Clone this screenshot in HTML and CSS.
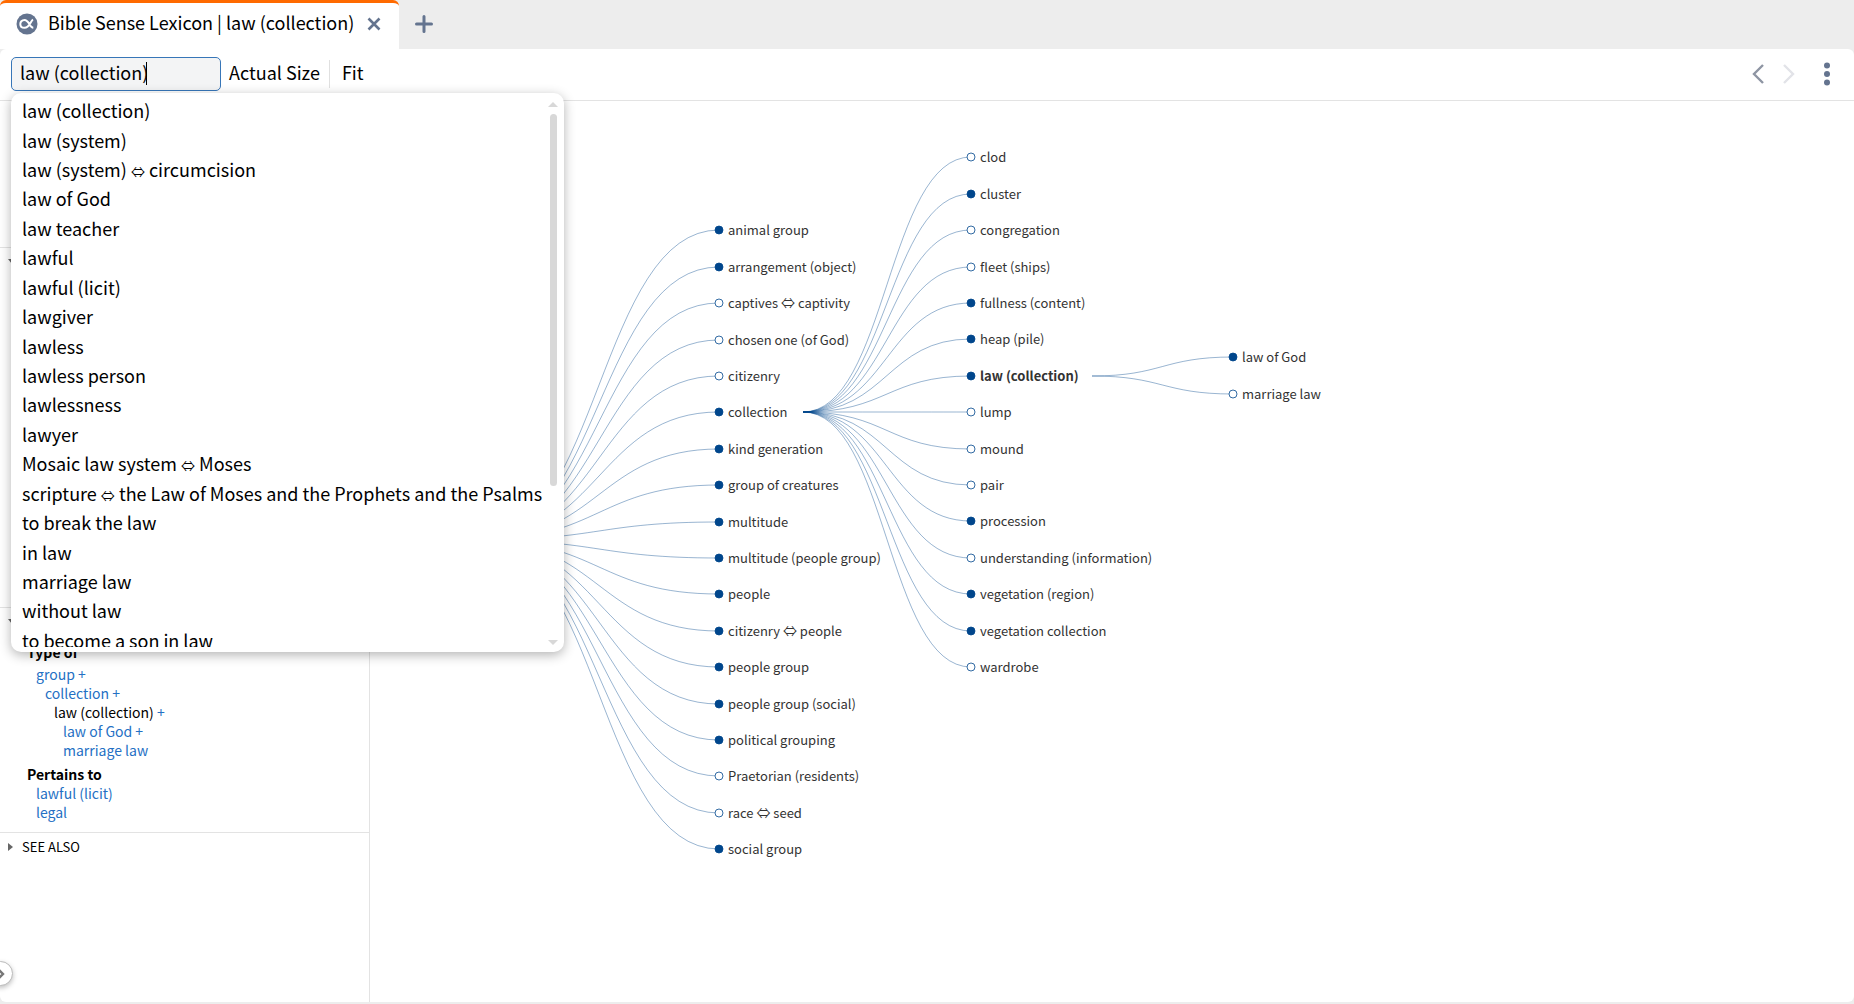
FILE: index.html
```html
<!DOCTYPE html>
<html lang="en">
<head>
    <meta charset="UTF-8">
    <meta name="viewport" content="width=device-width, initial-scale=1.0">
    <title>Bible Sense Lexicon</title>
    <link rel="stylesheet" href="styles.css">
</head>
<body>
    <header class="tabbar">
        <div class="tab">
            <svg class="tab-icon" viewBox="0 0 22 22" width="22" height="22">
                <circle cx="11" cy="11" r="10.5" fill="#64748f"/>
                <path d="M17 6.5C14.5 8 13.5 14.8 8.5 14.8C2.9 14.8 2.9 7 8.5 7C13.2 7 13.4 14.6 17.3 14.8" fill="none" stroke="#fff" stroke-width="2"/>
            </svg>
            <span class="tab-title">Bible Sense Lexicon | law (collection)</span>
            <button class="icon-btn" aria-label="Close tab">
                <svg viewBox="0 0 14 14" width="14" height="14"><path d="M1.5 1.5L12.5 12.5M12.5 1.5L1.5 12.5" stroke="#64748f" stroke-width="2.6"/></svg>
            </button>
        </div>
        <button class="icon-btn new-tab" aria-label="New tab">
            <svg viewBox="0 0 18 18" width="18" height="18"><path d="M9 1.5V16.5M1.5 9H16.5" stroke="#64748f" stroke-width="3" stroke-linecap="round"/></svg>
        </button>
    </header>

    <div class="toolbar">
        <div class="search">
            <input type="text" id="sense" value="law (collection)" aria-label="Sense" autocomplete="off">
            <span class="caret"></span>
            <div class="dropdown">
                <div class="list-clip">
                    <ul class="list">
                        <li>law (collection)</li>
                        <li>law (system)</li>
                        <li>law (system) <span class="arrow">⇔</span> circumcision</li>
                        <li>law of God</li>
                        <li>law teacher</li>
                        <li>lawful</li>
                        <li>lawful (licit)</li>
                        <li>lawgiver</li>
                        <li>lawless</li>
                        <li>lawless person</li>
                        <li>lawlessness</li>
                        <li>lawyer</li>
                        <li>Mosaic law system <span class="arrow">⇔</span> Moses</li>
                        <li>scripture <span class="arrow">⇔</span> the Law of Moses and the Prophets and the Psalms</li>
                        <li>to break the law</li>
                        <li>in law</li>
                        <li>marriage law</li>
                        <li>without law</li>
                        <li>to become a son in law</li>
                    </ul>
                </div>
                <div class="scrollbar">
                    <svg viewBox="0 0 10 5" width="10" height="5"><path d="M0 5L5 0L10 5Z" fill="#d8d8d8"/></svg>
                    <div class="track"><div class="thumb"></div></div>
                    <svg viewBox="0 0 10 5" width="10" height="5"><path d="M0 0L5 5L10 0Z" fill="#d8d8d8"/></svg>
                </div>
            </div>
        </div>
        <button class="text-btn">Actual Size</button>
        <span class="divider"></span>
        <button class="text-btn">Fit</button>
        <div class="nav">
            <button class="icon-btn" aria-label="Back">
                <svg viewBox="0 0 12 20" width="12" height="20"><path d="M11 1L2 10L11 19" fill="none" stroke="#8e95a3" stroke-width="2.4"/></svg>
            </button>
            <button class="icon-btn" aria-label="Forward">
                <svg viewBox="0 0 12 20" width="12" height="20"><path d="M1 1L10 10L1 19" fill="none" stroke="#e2e3e8" stroke-width="2.4"/></svg>
            </button>
            <button class="icon-btn menu" aria-label="Menu">
                <svg viewBox="0 0 6 24" width="6" height="24" fill="#64748f"><circle cx="3" cy="3.5" r="3"/><circle cx="3" cy="12" r="3"/><circle cx="3" cy="20.5" r="3"/></svg>
            </button>
        </div>
    </div>

    <main class="content">
        <aside class="sidebar">
            <section class="section intro"></section>
            <section class="section senses">
                <button class="toggle open" aria-label="Toggle section"></button>
            </section>
            <section class="section relations">
                <button class="toggle open" aria-label="Toggle section"></button>
                <h3>Type of</h3>
                <ul class="relation first">
                    <li><a href="#">group</a> <a href="#">+</a></li>
                    <li class="level1"><a href="#">collection</a> <a href="#">+</a></li>
                    <li class="level2">law (collection) <a href="#">+</a></li>
                    <li class="level3"><a href="#">law of God</a> <a href="#">+</a></li>
                    <li class="level3"><a href="#">marriage law</a></li>
                </ul>
                <h3>Pertains to</h3>
                <ul class="relation">
                    <li><a href="#">lawful (licit)</a></li>
                    <li><a href="#">legal</a></li>
                </ul>
            </section>
            <section class="section">
                <button class="toggle">SEE ALSO</button>
            </section>
            <button class="expand" aria-label="Expand panel">
                <svg viewBox="0 0 8 10" width="8" height="10"><path d="M1 1L5 5L1 9" fill="none" stroke="#777" stroke-width="2.4"/></svg>
            </button>
        </aside>
        <svg class="graph" id="graph"></svg>
    </main>

    <script src="graph.js"></script>
</body>
</html>
```
FILE: styles.css
```css
* {
    box-sizing: border-box;
}

body {
    margin: 0;
    height: 100vh;
    display: flex;
    flex-direction: column;
    overflow: hidden;
    background-color: #ededed;
    font-family: "Noto Sans CJK SC", "Noto Sans", sans-serif;
    font-size: 18px;
    color: #000;
}

button {
    font: inherit;
    color: inherit;
    background: none;
    border: none;
    padding: 0;
    cursor: pointer;
}

ul {
    list-style: none;
    margin: 0;
    padding: 0;
}

a {
    color: #2470c4;
    text-decoration: none;
}

svg {
    display: block;
}

/* Tabs */
.tabbar {
    display: flex;
    align-items: center;
    height: 49px;
}

.tab {
    display: flex;
    align-items: center;
    height: 49px;
    width: 399px;
    padding: 0 18px 5px 16px;
    background-color: #fff;
    border-top: 3px solid #ff6a00;
    border-radius: 6px 6px 0 0;
}

.tab-title {
    flex: 1;
    margin-left: 10px;
    padding-bottom: 3px;
    line-height: 24px;
    white-space: nowrap;
}

.new-tab {
    margin-left: 16px;
    padding-bottom: 2px;
}

/* Toolbar */
.toolbar {
    display: flex;
    align-items: center;
    height: 52px;
    padding: 0 24px 2px 11px;
    background-color: #fff;
    border-bottom: 1px solid #e3e3e3;
    border-radius: 6px 6px 0 0;
}

.search {
    position: relative;
}

.search input {
    display: block;
    width: 210px;
    height: 34px;
    padding: 0 8px 4px;
    font: inherit;
    background-color: #f3f4f5;
    border: 1px solid #3776b8;
    border-radius: 5px;
    outline: none;
}

.caret {
    position: absolute;
    left: 135px;
    top: 5px;
    width: 1px;
    height: 23px;
    background-color: #000;
}

.text-btn {
    margin-left: 8px;
    padding-bottom: 3px;
}

.divider {
    width: 1px;
    height: 28px;
    margin: 0 4px 0 9px;
    background-color: #e0e0e0;
}

.nav {
    display: flex;
    align-items: center;
    gap: 19px;
    margin-left: auto;
}

.menu {
    margin-left: 10px;
}

/* Suggestions */
.dropdown {
    position: absolute;
    z-index: 2;
    left: 0;
    top: 36px;
    display: flex;
    width: 553px;
    height: 559px;
    padding: 3px 6px 5px 11px;
    background-color: #fff;
    border-radius: 10px;
    box-shadow: 0 3px 12px rgba(0, 0, 0, 0.3);
}

.list-clip {
    flex: 1;
    overflow: hidden;
}

.list {
    display: grid;
    grid-auto-rows: 1fr;
    align-items: center;
    height: 559px;
    line-height: 28px;
    white-space: nowrap;
}

.arrow {
    font-size: 14px;
    line-height: 1;
}

.scrollbar {
    display: flex;
    flex-direction: column;
    align-items: center;
    width: 10px;
    padding: 6px 0 2px;
}

.track {
    flex: 1;
    padding: 7px 0;
}

.thumb {
    width: 7px;
    height: 372px;
    background-color: #d8d8d8;
    border-radius: 4px;
}

/* Side panel */
.content {
    flex: 1;
    display: flex;
    min-height: 0;
    margin-bottom: 2px;
    background-color: #fff;
    border-radius: 0 0 6px 6px;
}

.sidebar {
    position: relative;
    width: 370px;
    border-right: 1px solid #e3e3e3;
    font-size: 14px;
    line-height: 19px;
}

.section {
    border-top: 1px solid #e3e3e3;
    padding: 4px 0 4px 8px;
}

.intro {
    height: 146px;
    border-top: none;
}

.senses {
    height: 360px;
}

.relations {
    padding-bottom: 10px;
}

.toggle {
    display: flex;
    align-items: center;
    gap: 9px;
    height: 19px;
    font-size: 13px;
}

.toggle::before {
    content: "";
    border: 4px solid transparent;
    border-left: 5px solid #666;
    border-right: none;
}

.toggle.open::before {
    border: 4px solid transparent;
    border-top: 5px solid #666;
    border-bottom: none;
}

.sidebar h3 {
    margin: 5px 0 0 19px;
    font-size: 14px;
    font-weight: bold;
}

.toggle + h3 {
    margin-top: 12px;
}

.relation {
    margin-left: 28px;
}

.relation.first {
    padding-top: 3px;
}

.level1 {
    padding-left: 9px;
}

.level2 {
    padding-left: 18px;
}

.level3 {
    padding-left: 27px;
}

.expand {
    position: absolute;
    left: -12px;
    bottom: 16px;
    display: flex;
    align-items: center;
    justify-content: flex-end;
    width: 25px;
    height: 25px;
    padding-right: 6px;
    background-color: #fff;
    border: 1px solid #bbb;
    border-radius: 50%;
    box-shadow: 0 2px 5px rgba(0, 0, 0, 0.25);
}

/* Graph */
.graph {
    flex: 1;
    min-width: 0;
    height: 100%;
    font-size: 13px;
}

.graph path {
    fill: none;
    stroke: #00468c;
    stroke-opacity: 0.4;
}

.graph circle {
    fill: #fff;
    stroke: #00468c;
    stroke-opacity: 0.8;
}

.graph .filled {
    fill: #00468c;
}

.graph text {
    fill: #333;
    white-space: pre;
}

.graph .current {
    font-weight: bold;
}
```
FILE: graph.js
```js
var SVG = "http://www.w3.org/2000/svg";
var graph = document.getElementById("graph");

// a star marks a sense that has children
var groups = [
    {
        from: [109, 439], x: 349, top: 129,
        items: ["*animal group", "*arrangement (object)", "captives ⇔ captivity", "chosen one (of God)",
            "citizenry", "*collection", "*kind generation", "*group of creatures", "*multitude",
            "*multitude (people group)", "*people", "*citizenry ⇔ people", "*people group",
            "*people group (social)", "*political grouping", "Praetorian (residents)", "race ⇔ seed", "*social group"]
    },
    {
        from: [433, 311], x: 601, top: 56,
        items: ["clod", "*cluster", "congregation", "fleet (ships)", "*fullness (content)", "*heap (pile)",
            "*law (collection)", "lump", "mound", "pair", "*procession", "understanding (information)",
            "*vegetation (region)", "*vegetation collection", "wardrobe"]
    },
    {
        from: [722, 275], x: 863, top: 256,
        items: ["*law of God", "marriage law"]
    }
];
var rowHeight = 36.4;

function add(parent, name, attrs) {
    var el = document.createElementNS(SVG, name);
    for (var key in attrs) {
        el.setAttribute(key, attrs[key]);
    }
    parent.appendChild(el);
    return el;
}

groups.forEach(function (group) {
    var x0 = group.from[0], y0 = group.from[1];
    var mid = (x0 + group.x) / 2;

    group.items.forEach(function (item, i) {
        var y = Math.ceil(group.top + i * rowHeight);
        var filled = item[0] === "*";
        var label = item.replace("*", "");

        add(graph, "path", { d: "M" + x0 + "," + y0 + "C" + mid + "," + y0 + " " + mid + "," + y + " " + group.x + "," + y });
        add(graph, "circle", { cx: group.x, cy: y, r: 4, "class": filled ? "filled" : "" });

        var text = add(graph, "text", { x: group.x + 9, y: y + 5, "class": label === "law (collection)" ? "current" : "" });
        label.split(/(⇔)/).forEach(function (part) {
            add(text, "tspan", part === "⇔" ? { "class": "arrow" } : {}).textContent = part;
        });
    });
});
```
